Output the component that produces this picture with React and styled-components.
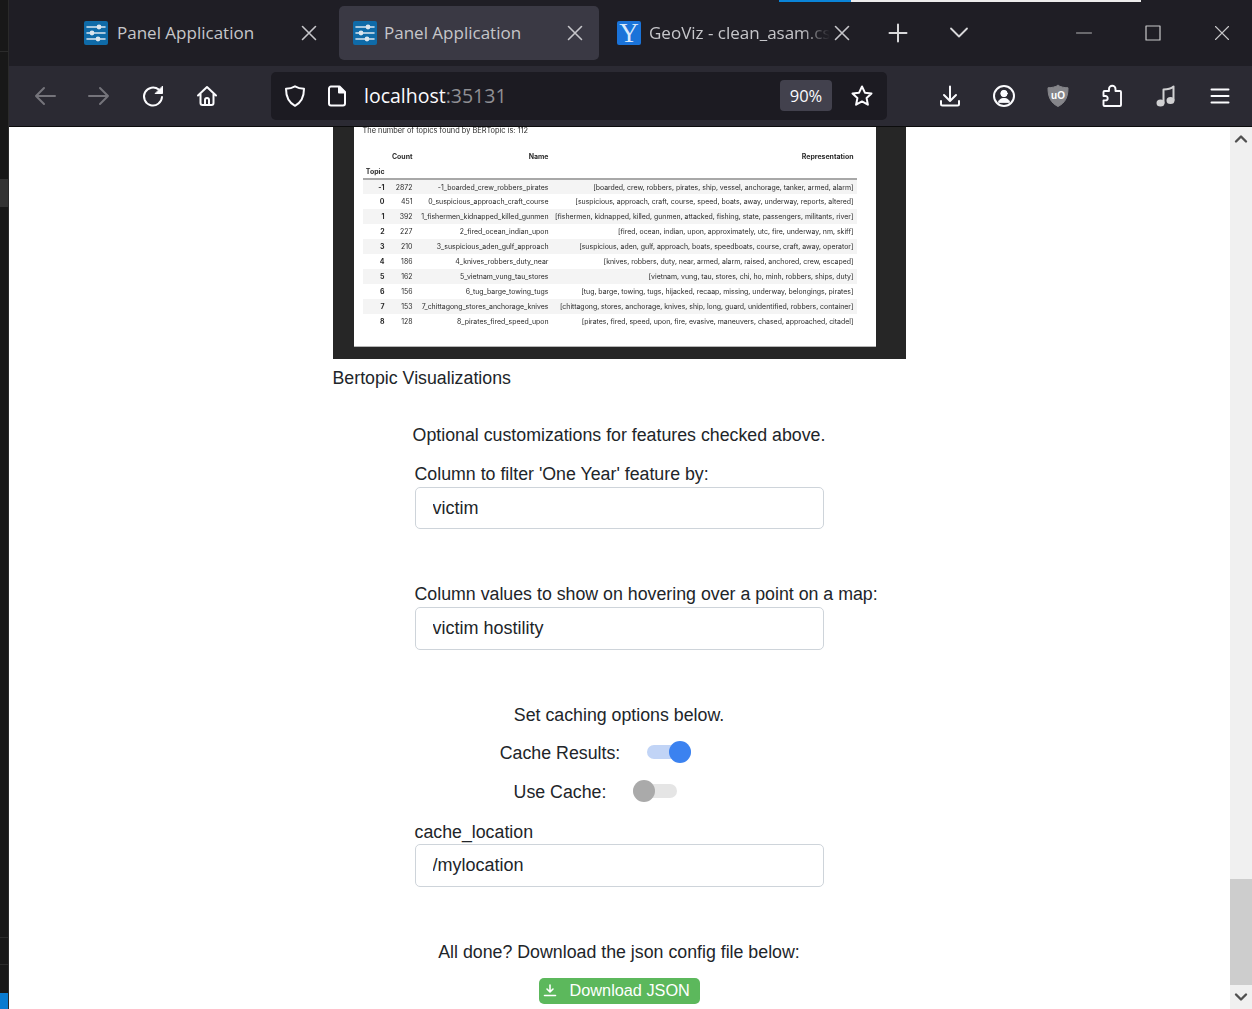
import React from 'react';
import styled, { createGlobalStyle } from 'styled-components';

const GlobalStyle = createGlobalStyle`
html, body {
  margin: 0;
  padding: 0;
  height: 100%;
  overflow: hidden;
  background: #fff;
}
* {
  box-sizing: border-box;
}
`;

const topics = [
  ['-1', '2872', '-1_boarded_crew_robbers_pirates', '[boarded, crew, robbers, pirates, ship, vessel, anchorage, tanker, armed, alarm]'],
  ['0', '451', '0_suspicious_approach_craft_course', '[suspicious, approach, craft, course, speed, boats, away, underway, reports, altered]'],
  ['1', '392', '1_fishermen_kidnapped_killed_gunmen', '[fishermen, kidnapped, killed, gunmen, attacked, fishing, state, passengers, militants, river]'],
  ['2', '227', '2_fired_ocean_indian_upon', '[fired, ocean, indian, upon, approximately, utc, fire, underway, nm, skiff]'],
  ['3', '210', '3_suspicious_aden_gulf_approach', '[suspicious, aden, gulf, approach, boats, speedboats, course, craft, away, operator]'],
  ['4', '186', '4_knives_robbers_duty_near', '[knives, robbers, duty, near, armed, alarm, raised, anchored, crew, escaped]'],
  ['5', '162', '5_vietnam_vung_tau_stores', '[vietnam, vung, tau, stores, chi, ho, minh, robbers, ships, duty]'],
  ['6', '156', '6_tug_barge_towing_tugs', '[tug, barge, towing, tugs, hijacked, recaap, missing, underway, belongings, pirates]'],
  ['7', '153', '7_chittagong_stores_anchorage_knives', '[chittagong, stores, anchorage, knives, ship, long, guard, unidentified, robbers, container]'],
  ['8', '128', '8_pirates_fired_speed_upon', '[pirates, fired, speed, upon, fire, evasive, maneuvers, chased, approached, citadel]'],
];

const AppWrap = styled.div`
display: flex;
width: 1252px;
height: 1009px;
overflow: hidden;
font-family: "Liberation Sans", Arial, sans-serif;
`;

const EditorStrip = styled.div`
display: flex;
flex-direction: column;
flex: 0 0 9px;
background: #181818;
border-right: 1px solid #2a2a2a;
`;

const StripPart = styled.div`
height: ${(p) => p.$h}px;
flex: ${(p) => (p.$grow ? 1 : 'none')};
background: ${(p) => p.$bg || '#181818'};
border-bottom: ${(p) => (p.$line ? '1px solid #2b2b2b' : 'none')};
`;

const Browser = styled.div`
display: flex;
flex-direction: column;
flex: 1;
min-width: 0;
`;

const TabBar = styled.div`
position: relative;
display: flex;
align-items: center;
height: 66px;
padding: 0 18px 0 61px;
background: #1f1e25;
color: #fbfbfe;
`;

const LoadLine = styled.div`
position: absolute;
top: 0;
left: 770px;
width: 362px;
height: 2px;
background: linear-gradient(to right, #0a84d8 0, #0a84d8 72px, #ececec 72px);
`;

const Tab = styled.div`
display: flex;
align-items: center;
width: 260px;
height: 54px;
margin-right: ${(p) => (p.$last ? 0 : 9)}px;
padding: 0 ${(p) => p.$right}px 0 ${(p) => p.$left}px;
border-radius: 5px;
background: ${(p) => (p.$active ? '#3a3944' : 'transparent')};
`;

const Favicon = styled.div`
display: flex;
align-items: center;
justify-content: center;
flex: 0 0 24px;
height: 24px;
border-radius: 2px;
background: ${(p) => p.$bg};
color: #dbe6ee;
`;

const YGlyph = styled.span`
font-family: "Liberation Serif", serif;
font-size: 27px;
line-height: 24px;
color: #d8e9fb;
`;

const TabTitle = styled.div`
flex: 1;
min-width: 0;
margin-left: ${(p) => p.$gap}px;
overflow: hidden;
white-space: nowrap;
font-family: "Open Sans", sans-serif;
font-size: 17px;
line-height: 24px;
color: #c6c6ca;
${(p) => (p.$fade ? 'mask-image: linear-gradient(to right, #000 84%, transparent 100%);' : '')}
`;

const BarIcon = styled.svg`
display: block;
flex: 0 0 ${(p) => p.$size || 24}px;
width: ${(p) => p.$size || 24}px;
height: ${(p) => p.$size || 24}px;
margin-left: ${(p) => p.$left || 0}px;
fill: none;
stroke: ${(p) => p.$color || '#fbfbfe'};
stroke-width: ${(p) => p.$stroke || 2};
stroke-linecap: round;
stroke-linejoin: round;
`;

const TabActions = styled.div`
display: flex;
align-items: center;
gap: 37px;
margin-left: 18px;
`;

const WindowButtons = styled.div`
display: flex;
align-items: center;
gap: 45px;
margin-left: auto;
`;

const Toolbar = styled.div`
display: flex;
align-items: center;
height: 61px;
padding: 0 0 1px 24px;
background: #2b2a33;
border-bottom: 1px solid #0c0c0d;
`;

const NavGroup = styled.div`
display: flex;
align-items: center;
gap: 30px;
`;

const UrlBar = styled.div`
display: flex;
align-items: center;
width: 616px;
height: 48px;
margin: 0 51px 0 52px;
padding: 0 13px 0 12px;
border-radius: 5px;
background: #1c1b22;
`;

const UrlText = styled.div`
margin-left: 15px;
font-family: "Open Sans", sans-serif;
font-size: 19.5px;
color: #fbfbfe;
`;

const UrlPort = styled.span`
color: #8f8f94;
`;

const ZoomBadge = styled.div`
display: flex;
align-items: center;
justify-content: center;
width: 52px;
height: 31px;
margin: 0 18px 0 auto;
border-radius: 4px;
background: #42414d;
font-family: "Open Sans", sans-serif;
font-size: 16.5px;
color: #fbfbfe;
`;

const ContentRow = styled.div`
display: flex;
flex: 1;
min-height: 0;
background: #fff;
`;

const Page = styled.div`
flex: 1;
min-width: 0;
overflow: hidden;
display: flex;
flex-direction: column;
align-items: center;
padding-right: 1px;
color: #212529;
font-size: 17.77px;
`;

const ScrollBar = styled.div`
display: flex;
flex-direction: column;
align-items: center;
flex: 0 0 22px;
background: #f0f0f0;
`;

const ScrollArrow = styled.div`
display: flex;
align-items: center;
justify-content: center;
flex: none;
width: 100%;
height: 24px;
`;

const ScrollSpace = styled.div`
flex: 1;
display: flex;
flex-direction: column;
justify-content: flex-end;
width: 100%;
`;

const ScrollThumb = styled.div`
height: 106px;
background: #cdcdcd;
`;

const Column = styled.div`
display: flex;
flex-direction: column;
width: 573px;
`;

const ImageFrame = styled.div`
width: 573px;
height: 232px;
padding: 0 30px 12px 21px;
background: #262626;
`;

const ImagePaper = styled.div`
height: 220px;
padding: 0 19px 0 9px;
background: #fff;
border-bottom: 1px solid #b5b5b5;
color: #2a2a2a;
font-family: Inter, "Liberation Sans", sans-serif;
font-size: 6.95px;
filter: blur(0.3px);
`;

const TopicsNote = styled.div`
height: 22px;
font-size: 7.4px;
line-height: 7px;
`;

const TopicTable = styled.table`
width: 494px;
table-layout: fixed;
border-collapse: collapse;
`;

const HeadRow = styled.tr`
height: 15px;
border-bottom: ${(p) => (p.$rule ? '2px solid #a8a8a8' : 'none')};
`;

const BodyRow = styled.tr`
height: 15px;
background: ${(p) => (p.$odd ? '#f4f4f4' : '#fff')};
`;

const Cell = styled.td`
padding: 0 3px 0 0;
text-align: right;
white-space: nowrap;
font-weight: ${(p) => (p.$bold ? 700 : 400)};
`;

const Line = styled.div`
height: 24px;
margin-top: ${(p) => p.$top || 0}px;
line-height: 24px;
white-space: nowrap;
text-align: ${(p) => (p.$center ? 'center' : 'left')};
`;

const Field = styled.div`
width: 409px;
align-self: center;
margin-top: ${(p) => p.$top || 0}px;
`;

const TextBox = styled.input`
display: block;
width: 100%;
height: ${(p) => p.$h || 42}px;
margin-top: ${(p) => p.$gap || 0}px;
padding: 0 16px 0 17px;
border: 1px solid #ced4da;
border-radius: 5px;
background: #fff;
color: #212529;
font-family: inherit;
font-size: 18px;
outline: none;
`;

const ToggleRow = styled.div`
display: flex;
align-items: center;
justify-content: center;
gap: 27px;
height: 24px;
margin-top: ${(p) => p.$top}px;
padding-right: 47px;
`;

const ToggleTrack = styled.div`
position: relative;
width: 44px;
height: 14px;
margin-top: -2px;
border-radius: 7px;
background: ${(p) => (p.$on ? '#c1d4f6' : '#e5e5e5')};
`;

const ToggleKnob = styled.div`
position: absolute;
top: -4px;
${(p) => (p.$on ? 'right: 0;' : 'left: 0;')}
width: 22px;
height: 22px;
border-radius: 50%;
background: ${(p) => (p.$on ? '#3b82f0' : '#aaaaaa')};
`;

const DownloadButton = styled.button`
display: flex;
align-items: center;
align-self: center;
width: 161px;
height: 26px;
margin-top: 14px;
padding: 0 0 2px 4px;
border: none;
border-radius: 5px;
background: #5cb85c;
color: #fff;
font-family: inherit;
font-size: 16.3px;
`;

const ButtonLabel = styled.span`
margin-left: 13px;
`;

const Sliders = () => (
  <BarIcon viewBox="0 0 24 24" $size={24} $color="#dbe6ee" $stroke={1.6}>
    <path d="M3 6h18M3 12h18M3 18h18" />
    <circle cx="15" cy="6" r="1.6" fill="#dbe6ee" />
    <circle cx="8" cy="12" r="1.6" fill="#dbe6ee" />
    <circle cx="14" cy="18" r="1.6" fill="#dbe6ee" />
  </BarIcon>
);

const Close = ({ size = 24, color = '#c6c6ca', stroke = 1.6 }) => (
  <BarIcon viewBox="0 0 24 24" $size={size} $color={color} $stroke={stroke}>
    <path d="M5.5 5.5l13 13M18.5 5.5l-13 13" />
  </BarIcon>
);

function App() {
  return (
    <AppWrap>
      <GlobalStyle />
      <EditorStrip>
        <StripPart $h={52} $line />
        <StripPart $h={127} />
        <StripPart $h={28} $bg="#333" />
        <StripPart $h={731} $line />
        <StripPart $h={27} $line />
        <StripPart $grow />
        <StripPart $h={16} $bg="#0a7bd0" />
      </EditorStrip>
      <Browser>
        <TabBar>
          <LoadLine />
          <Tab $left={14} $right={9}>
            <Favicon $bg="#0f6ba8"><Sliders /></Favicon>
            <TabTitle $gap={9}>Panel Application</TabTitle>
            <Close />
          </Tab>
          <Tab $active $left={14} $right={12}>
            <Favicon $bg="#0f6ba8"><Sliders /></Favicon>
            <TabTitle $gap={7}>Panel Application</TabTitle>
            <Close />
          </Tab>
          <Tab $last $left={9} $right={14}>
            <Favicon $bg="#1a73d9"><YGlyph>Y</YGlyph></Favicon>
            <TabTitle $gap={8} $fade>GeoViz - clean_asam.csv</TabTitle>
            <Close />
          </Tab>
          <TabActions>
            <BarIcon viewBox="0 0 24 24" $color="#d8d8da" $stroke={2}>
              <path d="M12 3.5v17M3.5 12h17" />
            </BarIcon>
            <BarIcon viewBox="0 0 24 24" $color="#d8d8da" $stroke={1.8}>
              <path d="M4 7.5l8 8 8-8" />
            </BarIcon>
          </TabActions>
          <WindowButtons>
            <BarIcon viewBox="0 0 24 24" $color="#b4b4b6" $stroke={1}>
              <path d="M4.5 12h15" />
            </BarIcon>
            <BarIcon viewBox="0 0 24 24" $color="#c8c8ca" $stroke={1.2}>
              <rect x="5" y="5" width="14" height="14" />
            </BarIcon>
            <Close color="#c8c8ca" stroke={1.1} />
          </WindowButtons>
        </TabBar>
        <Toolbar>
          <NavGroup>
            <BarIcon viewBox="0 0 24 24" $color="#75747b">
              <path d="M22 12H3M11 4l-8 8 8 8" />
            </BarIcon>
            <BarIcon viewBox="0 0 24 24" $color="#75747b">
              <path d="M2 12h19M13 4l8 8-8 8" />
            </BarIcon>
            <BarIcon viewBox="0 0 24 24">
              <path d="M21 13a9 9 0 1 1-3.2-7.4" />
              <path d="M21.5 2.5v7h-7z" fill="#fbfbfe" strokeWidth="1" />
            </BarIcon>
            <BarIcon viewBox="0 0 24 24">
              <path d="M3 11.5L12 3l9 8.5M5.5 10v9a2 2 0 0 0 2 2h9a2 2 0 0 0 2-2v-9" />
              <path d="M10 21v-5a2 2 0 0 1 4 0v5" />
            </BarIcon>
          </NavGroup>
          <UrlBar>
            <BarIcon viewBox="0 0 24 24">
              <path d="M12 2.3c2.6 1.5 5.4 2.3 9 2.5 0 8.2-2.8 13.8-9 17-6.2-3.2-9-8.8-9-17 3.600-.2 6.400-1 9-2.500z" />
            </BarIcon>
            <BarIcon viewBox="0 0 24 24" $left={18}>
              <path d="M6 2.5h8.500l5.500 5.500v11.500a2 2 0 0 1-2 2H6a2 2 0 0 1-2-2v-15a2 2 0 0 1 2-2z" />
              <path d="M14 3v5.500h5.500z" fill="#fbfbfe" />
            </BarIcon>
            <UrlText>localhost<UrlPort>:35131</UrlPort></UrlText>
            <ZoomBadge>90%</ZoomBadge>
            <BarIcon viewBox="0 0 24 24">
              <path d="M12 2.500l2.900 6.200 6.600.8-4.900 4.600 1.300 6.600-5.900-3.300-5.900 3.300 1.300-6.600-4.900-4.600 6.600-.8z" />
            </BarIcon>
          </UrlBar>
          <NavGroup>
            <BarIcon viewBox="0 0 24 24">
              <path d="M12 2.500v14M6 11l6 6 6-6M3 17v3a1.500 1.500 0 0 0 1.500 1.500h15A1.500 1.500 0 0 0 21 20v-3" />
            </BarIcon>
            <BarIcon viewBox="0 0 24 24">
              <circle cx="12" cy="12" r="10" />
              <circle cx="12" cy="9.500" r="3.200" fill="#fbfbfe" strokeWidth="1" />
              <path d="M6.500 18c.5-2.500 2.500-3.500 5.500-3.500s5 1 5.500 3.500z" fill="#fbfbfe" strokeWidth="1" />
            </BarIcon>
            <BarIcon viewBox="0 0 24 24" $color="#85858a" $stroke={1}>
              <path d="M12 1.500c3 1.500 6 2.200 10 2.300 0 9-2.500 15-10 18.700C4.500 18.800 2 12.800 2 3.800c4-.1 7-.8 10-2.300z" fill="#85858a" />
              <text x="12" y="14.500" textAnchor="middle" fontFamily="Liberation Sans, sans-serif" fontSize="10" fontWeight="700" fill="#fff" stroke="none">uO</text>
            </BarIcon>
            <BarIcon viewBox="0 0 24 24" $stroke={1.9}>
              <path d="M9 7H4.500a1 1 0 0 0-1 1v4h2a2.200 2.200 0 0 1 0 4.400h-2V21a1 1 0 0 0 1 1H20a1 1 0 0 0 1-1V8a1 1 0 0 0-1-1h-4.500V5a3.200 3.200 0 0 0-6.500 0z" />
            </BarIcon>
            <BarIcon viewBox="0 0 24 24" $color="#d0d0d2" $stroke={2}>
              <path d="M9.500 19V5.500c3 0 7.500-.8 10-3V16" />
              <ellipse cx="6.500" cy="19" rx="3" ry="2.600" fill="#d0d0d2" />
              <ellipse cx="16.500" cy="16.500" rx="3" ry="2.600" fill="#d0d0d2" />
            </BarIcon>
            <BarIcon viewBox="0 0 24 24">
              <path d="M3.500 5.500h17M3.500 12h17M3.500 18.500h17" />
            </BarIcon>
          </NavGroup>
        </Toolbar>
        <ContentRow>
          <Page>
            <Column>
              <ImageFrame>
                <ImagePaper>
                  <TopicsNote>The number of topics found by BERTopic is: 112</TopicsNote>
                  <TopicTable>
                    <colgroup>
                      <col width="25" />
                      <col width="28" />
                      <col width="136" />
                      <col width="305" />
                    </colgroup>
                    <tbody>
                      <HeadRow>
                        <Cell />
                        <Cell $bold>Count</Cell>
                        <Cell $bold>Name</Cell>
                        <Cell $bold>Representation</Cell>
                      </HeadRow>
                      <HeadRow $rule>
                        <Cell $bold>Topic</Cell>
                        <Cell />
                        <Cell />
                        <Cell />
                      </HeadRow>
                      {topics.map((row, i) => (
                        <BodyRow key={row[0]} $odd={i % 2 === 0}>
                          <Cell $bold>{row[0]}</Cell>
                          <Cell>{row[1]}</Cell>
                          <Cell>{row[2]}</Cell>
                          <Cell>{row[3]}</Cell>
                        </BodyRow>
                      ))}
                    </tbody>
                  </TopicTable>
                </ImagePaper>
              </ImageFrame>
              <Line $top={7}>Bertopic Visualizations</Line>
              <Line $top={33} $center>Optional customizations for features checked above.</Line>
              <Field $top={15}>
                <Line>Column to filter &#39;One Year&#39; feature by:</Line>
                <TextBox $gap={1} defaultValue="victim" />
              </Field>
              <Field $top={53}>
                <Line>Column values to show on hovering over a point on a map:</Line>
                <TextBox $gap={1} $h={43} defaultValue="victim hostility" />
              </Field>
              <Line $top={53} $center>Set caching options below.</Line>
              <ToggleRow $top={14}>
                <span>Cache Results:</span>
                <ToggleTrack $on><ToggleKnob $on /></ToggleTrack>
              </ToggleRow>
              <ToggleRow $top={15}>
                <span>Use Cache:</span>
                <ToggleTrack><ToggleKnob /></ToggleTrack>
              </ToggleRow>
              <Field $top={16}>
                <Line>cache_location</Line>
                <TextBox $h={43} defaultValue="/mylocation" />
              </Field>
              <Line $top={53} $center>All done? Download the json config file below:</Line>
              <DownloadButton type="button">
                <BarIcon viewBox="0 0 14 14" $size={14} $color="#fff" $stroke={1.6}>
                  <path d="M7 2v6.500M4 6l3 3 3-3M1.500 12.500h11" />
                </BarIcon>
                <ButtonLabel>Download JSON</ButtonLabel>
              </DownloadButton>
            </Column>
          </Page>
          <ScrollBar>
            <ScrollArrow>
              <BarIcon viewBox="0 0 14 14" $size={14} $color="#505050" $stroke={2.4}>
                <path d="M2 9.500l5-5 5 5" />
              </BarIcon>
            </ScrollArrow>
            <ScrollSpace><ScrollThumb /></ScrollSpace>
            <ScrollArrow>
              <BarIcon viewBox="0 0 14 14" $size={14} $color="#505050" $stroke={2.4}>
                <path d="M2 4.500l5 5 5-5" />
              </BarIcon>
            </ScrollArrow>
          </ScrollBar>
        </ContentRow>
      </Browser>
    </AppWrap>
  );
}

export default App;
